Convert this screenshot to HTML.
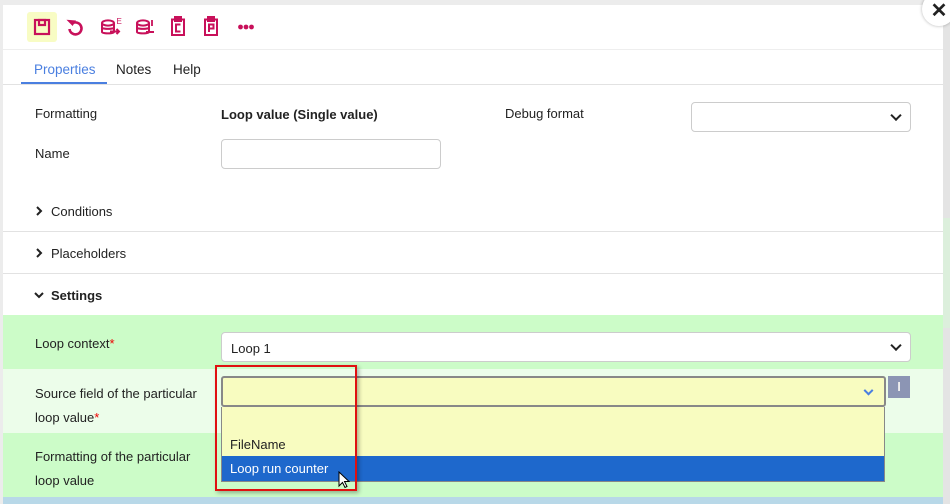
<!DOCTYPE html>
<html><head><meta charset="utf-8"><style>
*{box-sizing:border-box;margin:0;padding:0}
body{width:950px;height:504px;overflow:hidden;background:#ececec;font-family:"Liberation Sans",sans-serif;font-size:13px;color:#222;position:relative}
.a{position:absolute}
.modal{left:3px;top:5px;width:940px;height:499px;background:#fff;overflow:hidden}
.lbl{font-size:13px;color:#222}
.sel{background:#fff;border:1px solid #ccc;border-radius:4px}
.chev{position:absolute;right:10px;top:50%;width:8px;height:8px;border-right:2px solid #222;border-bottom:2px solid #222;transform:translateY(-70%) rotate(45deg)}
.hr{height:1px;background:#e2e2e2;left:0;width:940px}
.req{color:#e00}
svg{position:absolute}
</style></head><body>
<div class="a" style="left:943px;top:0;width:7px;height:504px;background:#e4e4e4"></div>
<div class="a" style="left:943px;top:218px;width:7px;height:110px;background:#dcefdc"></div>
<div class="a modal">
  <div class="a" style="left:24px;top:7px;width:30px;height:30px;background:#f8fcc4;border-radius:3px"></div>
  <svg style="left:30px;top:13px" width="18" height="18" viewBox="0 0 18 18" fill="none" stroke="#c8105a" stroke-width="2.2"><rect x="2" y="2" width="14" height="14"/><rect x="6" y="2" width="6" height="5"/></svg>
  <svg style="left:63px;top:13px" width="18" height="19" viewBox="0 0 18 19" fill="none" stroke="#c8105a" stroke-width="2.6"><path d="M6 5.5 A6 6 0 1 1 3.5 11"/><path d="M2 2.5 L6.5 7 L9 3 Z" fill="#c8105a" stroke-width="1.2"/></svg>
  <svg style="left:97px;top:12px" width="24" height="20" viewBox="0 0 24 20" fill="none" stroke="#c8105a" stroke-width="2"><ellipse cx="8" cy="6" rx="6" ry="2.6"/><path d="M2 6v9c0 1.8 12 1.8 12 0V6M2 10.5c0 1.8 12 1.8 12 0"/><path d="M10 14.5h9M16.5 12l2.5 2.5-2.5 2.5"/><text x="16.5" y="7" font-size="8" fill="#c8105a" stroke="none" font-family="Liberation Sans">E</text></svg>
  <svg style="left:132px;top:12px" width="22" height="20" viewBox="0 0 22 20" fill="none" stroke="#c8105a" stroke-width="2"><ellipse cx="8" cy="6" rx="6" ry="2.6"/><path d="M2 6v9c0 1.8 12 1.8 12 0V6M2 10.5c0 1.8 12 1.8 12 0"/><path d="M11 15h8"/><path d="M17 3v6" stroke-width="1.8"/></svg>
  <svg style="left:167px;top:11px" width="16" height="21" viewBox="0 0 16 21" fill="none" stroke="#c8105a" stroke-width="2"><rect x="2" y="3.5" width="12" height="15.5"/><rect x="5" y="1" width="6" height="4" fill="#c8105a"/><path d="M10.5 8.5H6v7h4.5"/></svg>
  <svg style="left:200px;top:11px" width="16" height="21" viewBox="0 0 16 21" fill="none" stroke="#c8105a" stroke-width="2"><rect x="2" y="3.5" width="12" height="15.5"/><rect x="5" y="1" width="6" height="4" fill="#c8105a"/><path d="M6 16V8.5h4.5v4H6"/></svg>
  <svg style="left:235px;top:19px" width="16" height="6" viewBox="0 0 16 6" fill="#c8105a"><circle cx="2.5" cy="3" r="2.4"/><circle cx="8" cy="3" r="2.4"/><circle cx="13.5" cy="3" r="2.4"/></svg>
  <div class="a hr" style="top:44px;background:#eee"></div>
  <div class="a" style="left:31px;top:57px;color:#4a7fe0;font-size:13.5px">Properties</div>
  <div class="a" style="left:113px;top:57px;font-size:13.5px">Notes</div>
  <div class="a" style="left:170px;top:57px;font-size:13.5px">Help</div>
  <div class="a" style="left:18px;top:77px;width:86px;height:2px;background:#4a7fe0"></div>
  <div class="a hr" style="top:79px"></div>
  <div class="a lbl" style="left:32px;top:101px">Formatting</div>
  <div class="a lbl" style="left:218px;top:102px;font-weight:bold">Loop value (Single value)</div>
  <div class="a lbl" style="left:502px;top:101px">Debug format</div>
  <div class="a sel" style="left:688px;top:97px;width:220px;height:30px"><div class="chev"></div></div>
  <div class="a lbl" style="left:32px;top:141px">Name</div>
  <div class="a sel" style="left:218px;top:134px;width:220px;height:30px"></div>
  <svg style="left:32px;top:201px" width="8" height="10" viewBox="0 0 8 10" fill="none" stroke="#222" stroke-width="2"><path d="M2 1l4 4-4 4"/></svg>
  <div class="a lbl" style="left:48px;top:199px">Conditions</div>
  <div class="a hr" style="top:226px"></div>
  <svg style="left:32px;top:243px" width="8" height="10" viewBox="0 0 8 10" fill="none" stroke="#222" stroke-width="2"><path d="M2 1l4 4-4 4"/></svg>
  <div class="a lbl" style="left:48px;top:241px">Placeholders</div>
  <div class="a hr" style="top:268px"></div>
  <svg style="left:30px;top:286px" width="12" height="8" viewBox="0 0 12 8" fill="none" stroke="#222" stroke-width="2"><path d="M2 2l4 4 4-4"/></svg>
  <div class="a lbl" style="left:48px;top:283px;font-weight:bold">Settings</div>
  <div class="a" style="left:0;top:310px;width:940px;height:54px;background:#ccfcc8"></div>
  <div class="a" style="left:0;top:364px;width:940px;height:64px;background:#ecfdea"></div>
  <div class="a" style="left:0;top:428px;width:940px;height:64px;background:#ccfcc8"></div>
  <div class="a" style="left:0;top:492px;width:940px;height:12px;background:#b8d8e8"></div>
  <div class="a lbl" style="left:32px;top:331px">Loop context<span class="req">*</span></div>
  <div class="a sel" style="left:218px;top:327px;width:690px;height:30px;padding:8px 9px">Loop 1<div class="chev"></div></div>
  <div class="a lbl" style="left:32px;top:377px;line-height:24px">Source field of the particular<br>loop value<span class="req">*</span></div>
  <div class="a lbl" style="left:32px;top:440px;line-height:24px">Formatting of the particular<br>loop value</div>
  <div class="a" style="left:218px;top:371px;width:665px;height:31px;background:#f8fcc0;border:2px solid #888;border-radius:3px"><div class="chev" style="border-color:#4a7fe0;right:12px;width:7px;height:7px"></div></div>
  <div class="a" style="left:885px;top:371px;width:22px;height:22px;background:#8c95b4;color:#eee;text-align:center;font-weight:bold;line-height:22px">I</div>
  <div class="a" style="left:218px;top:402px;width:664px;height:75px;background:#f8fcc0;border:1px solid #888;border-top:none"></div>
  <div class="a lbl" style="left:227px;top:432px">FileName</div>
  <div class="a" style="left:219px;top:451px;width:662px;height:25px;background:#1e68cc;color:#fff;padding:5px 8px;font-size:13px">Loop run counter</div>
  <div class="a" style="left:212px;top:360px;width:142px;height:126px;border:2px solid #e01010;box-shadow:2px 2px 4px rgba(0,0,0,.3)"></div>
  <svg style="left:335px;top:466px" width="12" height="18" viewBox="0 0 12 18"><path d="M1 1v14l3.5-3.5 2.5 5 2-1-2.5-5H11z" fill="#fff" stroke="#000" stroke-width="1"/></svg>
</div>
<div class="a" style="left:922px;top:-8px;width:34px;height:34px;border-radius:50%;background:#fff;box-shadow:0 0 3px rgba(0,0,0,.3);text-align:center;line-height:38px;font-size:20px;font-weight:bold;color:#222">✕</div>
</body></html>
